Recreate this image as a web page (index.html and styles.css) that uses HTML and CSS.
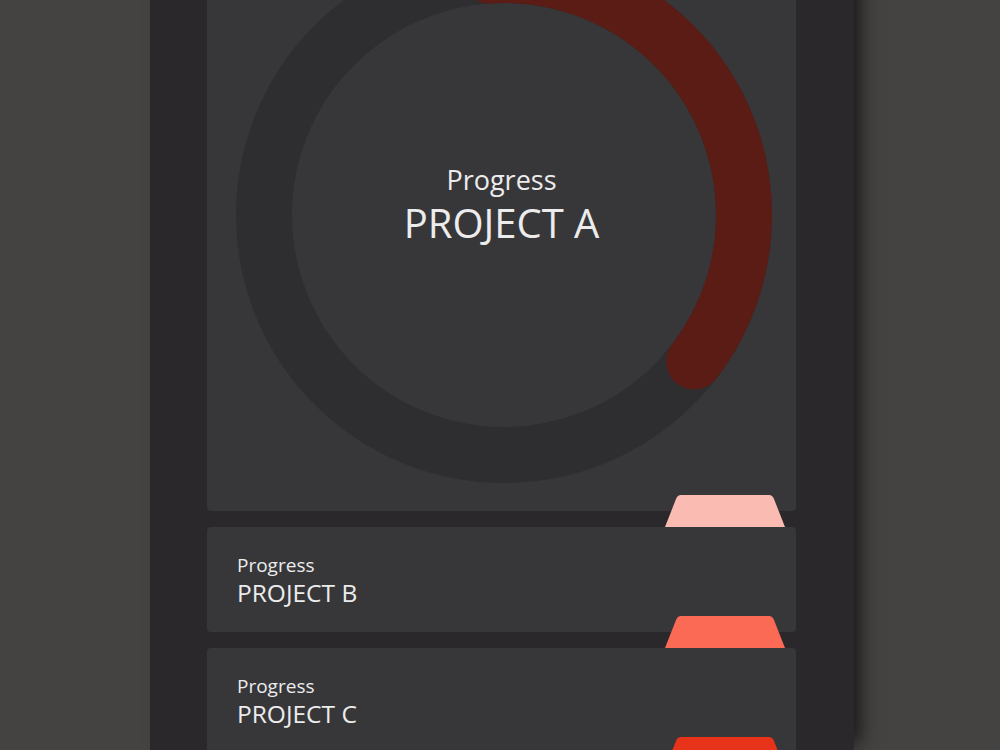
FILE: index.html
```html
<!DOCTYPE html>
<html lang="en">
<head>
    <meta charset="UTF-8">
    <meta name="viewport" content="width=device-width, initial-scale=1.0">
    <title>Project Progress</title>
    <link rel="stylesheet" href="styles.css">
</head>
<body>
    <div class="phone">
        <div class="card card-main">
            <svg class="donut" viewBox="0 0 589 541" width="589" height="541">
                <circle class="ring" cx="297" cy="245" r="240"></circle>
                <circle class="arc" cx="297" cy="245" r="240" stroke-dasharray="549 1508" transform="rotate(-93.5 297 245)"></circle>
            </svg>
            <div class="main-label">
                <div class="label-small">Progress</div>
                <div class="label-big">PROJECT A</div>
            </div>
            <svg class="tab tab-light" viewBox="0 0 120 32" width="120" height="32">
                <path d="M0 32 L11 4 Q12.5 0 16 0 L104 0 Q107.5 0 109 4 L120 32 Z"></path>
            </svg>
        </div>

        <div class="card card-row">
            <div class="row-small">Progress</div>
            <div class="row-big">PROJECT B</div>
            <svg class="tab tab-mid" viewBox="0 0 120 32" width="120" height="32">
                <path d="M0 32 L11 4 Q12.5 0 16 0 L104 0 Q107.5 0 109 4 L120 32 Z"></path>
            </svg>
        </div>

        <div class="card card-row">
            <div class="row-small">Progress</div>
            <div class="row-big">PROJECT C</div>
            <svg class="tab tab-dark" viewBox="0 0 120 32" width="120" height="32">
                <path d="M0 32 L11 4 Q12.5 0 16 0 L104 0 Q107.5 0 109 4 L120 32 Z"></path>
            </svg>
        </div>
    </div>
</body>
</html>
```

FILE: styles.css
```css
html, body {
    margin: 0;
    height: 100%;
    overflow: hidden;
}
body {
    font-family: 'Open Sans', 'Noto Sans', sans-serif;
    background-color: #444341;
    color: #ececec;
}
.phone {
    width: 704px;
    height: 780px;
    margin-left: 150px;
    margin-top: -30px;
    padding: 0 58px 0 57px;
    box-sizing: border-box;
    overflow: hidden;
    background-color: #2a282b;
    box-shadow: 12px 0 18px -6px rgba(0,0,0,0.65);
    display: flex;
    flex-direction: column;
    gap: 16px;
}
.card {
    position: relative;
    flex-shrink: 0;
    background-color: #37373a;
    border-radius: 4px;
}
.card-main {
    height: 541px;
    display: grid;
}
.donut {
    grid-area: 1 / 1;
    display: block;
}
.ring {
    fill: none;
    stroke: #2e2e30;
    stroke-width: 56;
}
.arc {
    fill: none;
    stroke: #5a1c14;
    stroke-width: 56;
    stroke-linecap: round;
}
.main-label {
    grid-area: 1 / 1;
    align-self: center;
    text-align: center;
    margin-bottom: 72px;
}
.label-small {
    font-size: 27px;
    line-height: 36px;
}
.label-big {
    font-size: 40px;
    line-height: 50px;
}
.card-row {
    height: 105px;
    padding: 25px 30px 0;
    box-sizing: border-box;
}
.row-small {
    font-size: 19px;
    line-height: 26px;
}
.row-big {
    font-size: 24.5px;
    line-height: 29px;
}
.tab {
    position: absolute;
    right: 11px;
    bottom: -16px;
    display: block;
}
.tab-light path {
    fill: #f9bbb2;
}
.tab-mid path {
    fill: #fb6a55;
}
.tab-dark path {
    fill: #e6331a;
}
```
